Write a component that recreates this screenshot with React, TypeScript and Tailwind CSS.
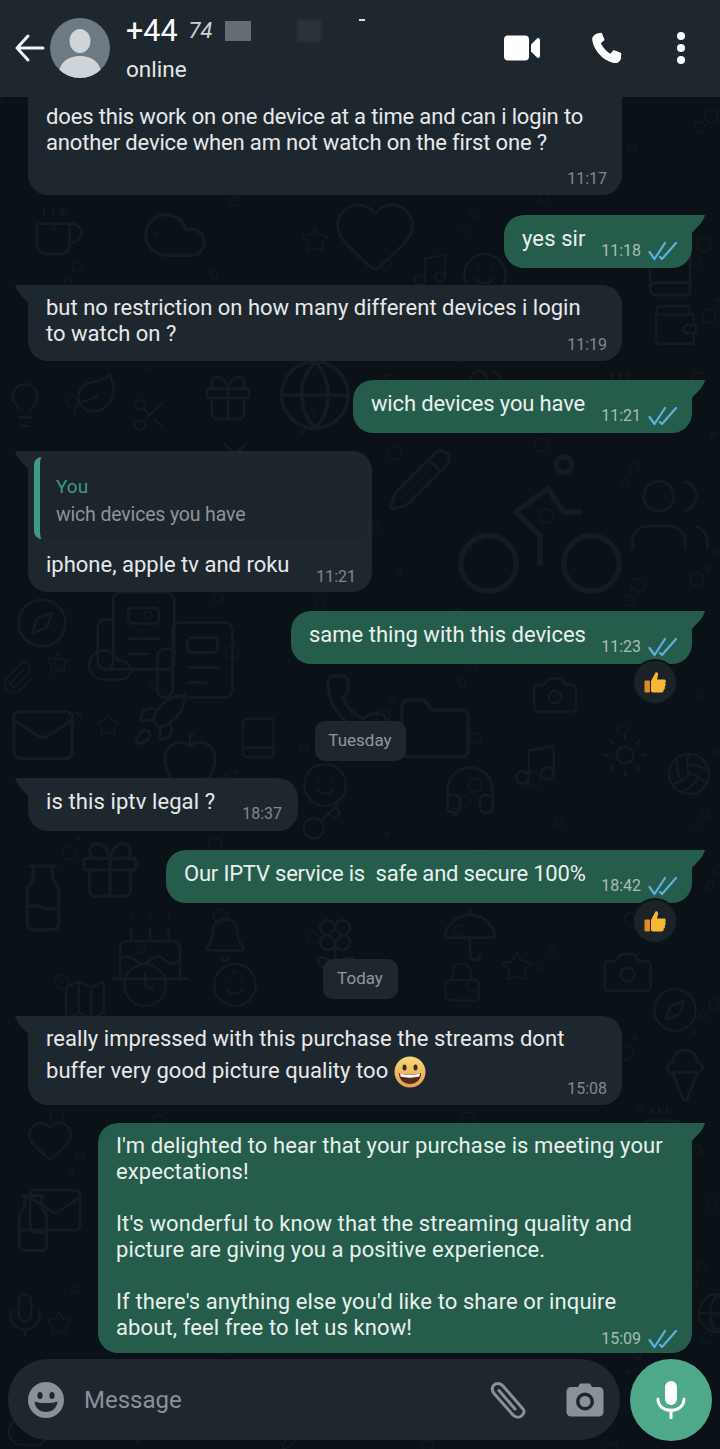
import React from "react";
import { Bike, Compass, Mail, Star, Paperclip, Heart, Music, Camera, Phone, Cloud, Gift, Smile, Pencil, Users, Clock, Folder, Coffee, Sun, Umbrella, Headphones, Book, Globe, Key, Bell, Lock, Flower2, IceCream, Milk, Mic, Rocket, Volleyball, Newspaper, Wallet, Cake, Leaf, Lightbulb, Scissors, Map, Tv, Apple } from "lucide-react";

const doodles: [any, number, number, number][] = [
  [Heart, 330, 190, 90],[Star, 300, 225, 30],[Music, 410, 250, 40],[Globe, 275, 355, 80],[Cloud, 140, 200, 70],[Coffee, 30, 205, 56],[Gift, 200, 370, 56],[Smile, 460, 250, 50],[Book, 640, 240, 60],[Users, 460, 365, 50],[Wallet, 650, 300, 50],[Coffee, 600, 370, 50],[Leaf, 70, 370, 50],[Scissors, 130, 395, 40],[Lightbulb, 0, 380, 50],[Tv, 210, 440, 50],
  [Bike, 445, 425, 190],[Pencil, 385, 445, 70],[Users, 625, 470, 90],[Compass, 14, 595, 56],[Newspaper, 90, 585, 92],[Newspaper, 150, 615, 90],[Cloud, 85, 640, 50],[Star, 45, 650, 26],[Paperclip, 0, 660, 36],
  [Phone, 322, 670, 70],[Folder, 395, 690, 80],[Camera, 530, 670, 50],[Mail, 8, 700, 70],[Rocket, 130, 690, 60],[Star, 95, 712, 26],[Apple, 160, 730, 60],[Book, 235, 715, 46],[Smile, 300, 760, 50],
  [Sun, 600, 730, 50],[Volleyball, 665, 750, 48],[Headphones, 440, 760, 60],[Music, 510, 740, 50],[Milk, 5, 860, 76],[Key, 300, 800, 44],[Gift, 75, 835, 70],[Cake, 105, 900, 90],[Flower2, 305, 915, 60],[Umbrella, 440, 905, 60],
  [Camera, 600, 945, 55],[Bell, 200, 915, 50],[Smile, 210, 960, 50],[Lock, 440, 960, 44],[Star, 500, 950, 34],[Compass, 650, 985, 50],[IceCream, 655, 1045, 60],[Map, 60, 975, 50],[Clock, 120, 960, 50],
  [Heart, 25, 1115, 50],[Milk, 0, 1190, 66],[Mail, 25, 1180, 60],[Star, 45, 1310, 28],[Coffee, 640, 1105, 46],[Mic, 0, 1290, 50],[Cloud, 5, 1410, 44],[Music, 130, 1415, 30],[Globe, 695, 1290, 46],[Pencil, 280, 1425, 26],[Key, 420, 1430, 24],[Leaf, 600, 1440, 20],
];

const dots = Array.from({ length: 190 }, (_, i) => ({
  x: (i * 137 + (i % 7) * 23) % 720,
  y: 100 + ((i * 211 + (i % 5) * 41) % 1340),
  r: 2 + (i % 4) * 1.6,
}));

function Pattern() {
  return (
    <svg className="absolute inset-0 w-[720px] h-[1449px]" viewBox="0 0 720 1449">
      {dots.map((d, i) => (
        <circle key={i} cx={d.x} cy={d.y} r={d.r} fill="none" stroke="#141b21" strokeWidth="1.2" />
      ))}
      {doodles.map(([Icon, x, y, s], i) => (
        <Icon key={i} x={x} y={y} width={s} height={s} color="#141c22" strokeWidth={s > 80 ? 0.7 : 1.1} />
      ))}
    </svg>
  );
}

function Ticks() {
  return (
    <svg width="30" height="20" viewBox="0 0 30 20" className="shrink-0" fill="none" stroke="#5cb2dc" strokeWidth="2.2" strokeLinecap="round" strokeLinejoin="round">
      <path d="M1.5 11 L6.5 18 L17 2" />
      <path d="M12 16 L14 18 L28 2" />
    </svg>
  );
}

function Meta({ time, out, className = "" }: { time: string; out?: boolean; className?: string }) {
  return (
    <div className={`flex items-end gap-[7px] ${className}`}>
      <span className={`text-[16px] leading-[20px] ${out ? "text-[#a5bfb5]" : "text-[#7f898f]"}`}>{time}</span>
      {out && <Ticks />}
    </div>
  );
}

function Tail({ out, color }: { out?: boolean; color: string }) {
  return out ? (
    <svg className="absolute top-0 right-[-13px]" width="14" height="28" viewBox="0 0 14 28"><path d="M0 0 H14 C12 8 6 12 1 18 V28 H0 Z" fill={color} /></svg>
  ) : (
    <svg className="absolute top-0 left-[-13px]" width="14" height="28" viewBox="0 0 14 28"><path d="M14 0 H0 C2 8 8 12 13 18 V28 H14 Z" fill={color} /></svg>
  );
}

function Reaction() {
  return (
    <div className="absolute right-[14px] bottom-[-41px] w-[46px] h-[46px] rounded-full bg-[#1b2329] border-2 border-[#0d1418] flex items-center justify-center">
      <svg width="24" height="24" viewBox="0 0 24 24">
        <path d="M8 11 L12.5 2.5 C14.5 1.8 15.5 3.5 15 5.5 L14 9.5 H21 C23 9.5 23.5 12 22 13 C23.2 14 23 16 21.6 16.6 C22.4 17.8 22 19.4 20.6 19.8 C21 21.4 20 22.6 18.5 22.6 H11 C9.5 22.6 8.5 21.8 8 21.2 Z" fill="#f7b733" />
        <rect x="1.5" y="10.5" width="5.5" height="12" rx="1" fill="#e08a24" />
      </svg>
    </div>
  );
}

type BubbleProps = { out?: boolean; w: string; mt: string; tail?: boolean; reaction?: boolean; children: React.ReactNode; className?: string };
function Bubble({ out, w, mt, tail, reaction, children, className = "" }: BubbleProps) {
  const color = out ? "#265c4b" : "#1f272e";
  return (
    <div className={`relative shrink-0 rounded-[20px] ${tail ? (out ? "rounded-tr-none" : "rounded-tl-none") : ""} ${out ? "self-end mr-[28px] bg-[#265c4b] text-[#e6f1ed]" : "self-start ml-[28px] bg-[#1f272e] text-[#e6e9eb]"} ${w} ${mt} ${className}`}>
      {tail && <Tail out={out} color={color} />}
      {children}
      {reaction && <Reaction />}
    </div>
  );
}

function Line({ text, time, out, spacing = "tracking-normal", pr = "pr-[14px]" }: { text: string; time: string; out?: boolean; spacing?: string; pr?: string }) {
  return (
    <div className={`flex justify-between items-start pl-[18px] h-[53px] ${pr}`}>
      <span className={`leading-[26px] pt-[11px] h-[53px] block whitespace-pre ${spacing}`}>{text}</span>
      <Meta time={time} out={out} className="pb-[7px] self-end" />
    </div>
  );
}

function Chip({ children, w, mt }: { children: React.ReactNode; w: string; mt: string }) {
  return <div className={`self-center shrink-0 h-[40px] rounded-[10px] bg-[#1f272e] text-[#8d979d] text-[17px] flex items-center justify-center ${w} ${mt}`}>{children}</div>;
}

function Grin() {
  return (
    <svg width="32" height="32" viewBox="0 0 32 32" className="inline-block align-middle">
      <defs>
        <linearGradient id="g" x1="0" y1="0" x2="0" y2="1"><stop offset="0" stopColor="#f8d878" /><stop offset="1" stopColor="#e3a04e" /></linearGradient>
      </defs>
      <circle cx="16" cy="16" r="15.5" fill="url(#g)" />
      <ellipse cx="10.5" cy="11.5" rx="2" ry="3" fill="#3d2a1c" />
      <ellipse cx="21.5" cy="11.5" rx="2" ry="3" fill="#3d2a1c" />
      <path d="M5 17 C10 19 22 19 27 17 C27 24 22 28 16 28 C10 28 5 24 5 17 Z" fill="#5a2a1c" />
      <path d="M6 17.5 C11 19.2 21 19.2 26 17.5 L25.4 20.5 C20 22 12 22 6.6 20.5 Z" fill="#fff" />
    </svg>
  );
}

export default function App() {
  return (
    <div className="relative w-[720px] h-[1449px] overflow-hidden bg-[#0b1217] flex flex-col font-['Roboto',sans-serif] text-[22px]">
      <Pattern />
      <header className="relative z-10 h-[97px] shrink-0 bg-[#1f272e] flex items-center text-white">
        <svg width="32" height="32" viewBox="0 0 32 32" className="ml-[14px] mt-[-2px] shrink-0" fill="none" stroke="#f2f4f5" strokeWidth="3" strokeLinecap="round" strokeLinejoin="round">
          <path d="M29 16 H3 M14 4 L3 16 L14 28" />
        </svg>
        <div className="ml-[4px] mt-[-2px] w-[60px] h-[60px] shrink-0 rounded-full bg-[#6b7a84] overflow-hidden flex flex-col items-center">
          <svg width="60" height="60" viewBox="0 0 60 60">
            <ellipse cx="30" cy="23" rx="10.5" ry="12" fill="#cfd4d8" />
            <path d="M9 56 C9 44 19 38 30 38 C41 38 51 44 51 56 C45 62 15 62 9 56 Z" fill="#cfd4d8" />
          </svg>
        </div>
        <div className="ml-[16px] flex flex-col mt-[-2px]">
          <div className="flex items-center h-[40px] -mt-[2px]">
            <span className="text-[30.5px] leading-[40px]">+44</span>
            <span className="ml-[11px] text-[22px] text-[#cfd3d6] italic">74</span>
            <span className="ml-[12px] w-[26px] h-[20px] bg-[#666c71]" />
            <span className="ml-[46px] w-[24px] h-[22px] bg-[#2b333a] blur-[1px]" />
            <span className="ml-[38px] mt-[-22px] w-[6px] h-[2px] bg-[#d8dcdf]" />
          </div>
          <span className="text-[22.5px] leading-[28px] text-[#e3e6e8] mt-[4px]">online</span>
        </div>
        <div className="ml-auto flex items-center mr-[35px] mt-[-1px]">
          <svg width="36" height="26" viewBox="0 0 36 26" fill="#fff">
            <rect x="0" y="0.5" width="25" height="25" rx="4" />
            <path d="M27 9.5 L33 3.5 C34.5 2.5 36 3.5 36 5 V21 C36 22.5 34.5 23.5 33 22.5 L27 16.5 Z" />
          </svg>
          <svg width="34" height="34" viewBox="0 0 24 24" fill="#fff" className="ml-[49px]">
            <path d="M6.6 1.6 L9 1.2 L11 6.4 L8.4 8.7 C9.3 11 12.5 14.8 15 16 L17.4 13.4 L22.8 15.6 L22.6 18.8 C22.4 21 20.6 22.8 18.3 22.6 C10.5 21.8 3.2 13.6 2.3 6.2 C2 3.9 4.2 2 6.6 1.6 Z" />
          </svg>
          <div className="ml-[54px] flex flex-col gap-[4px]">
            <span className="w-[8px] h-[8px] rounded-full bg-white" />
            <span className="w-[8px] h-[8px] rounded-full bg-white" />
            <span className="w-[8px] h-[8px] rounded-full bg-white" />
          </div>
        </div>
      </header>

      <main className="relative flex-1 flex flex-col min-h-0">
        <Bubble w="w-[594px]" mt="mt-[-20px]" className="h-[118px]">
          <p className="pl-[18px] pt-[27px] leading-[26px] whitespace-pre tracking-[-0.16px]">does this work on one device at a time and can i login to{"\n"}another device when am not watch on the first one ?</p>
          <Meta time="11:17" className="absolute right-[15px] bottom-[6px]" />
        </Bubble>
        <Bubble out tail w="w-[188px]" mt="mt-[20px]"><Line out spacing="tracking-[0.1px]" text="yes sir" time="11:18" /></Bubble>
        <Bubble tail w="w-[594px]" mt="mt-[17px]" className="h-[76px]">
          <p className="pl-[18px] pt-[10px] leading-[26px] whitespace-pre">but no restriction on how many different devices i login{"\n"}to watch on ?</p>
          <Meta time="11:19" className="absolute right-[15px] bottom-[6px]" />
        </Bubble>
        <Bubble out tail w="w-[339px]" mt="mt-[19px]"><Line out spacing="tracking-[-0.16px]" text="wich devices you have" time="11:21" /></Bubble>
        <Bubble tail w="w-[344px]" mt="mt-[18px]" className="h-[141px] pt-[6px]">
          <div className="ml-[6px] mr-[5px] h-[82px] rounded-[8px] bg-[#1d242b] border-l-[6px] border-[#3f9c80] pl-[16px] pt-[17px]">
            <div className="text-[#3c9a80] text-[19px] leading-[26px]">You</div>
            <div className="text-[#8b959b] text-[19.5px] leading-[30px] tracking-[-0.16px]">wich devices you have</div>
          </div>
          <div className="pl-[18px] mt-[13px] leading-[26px]">iphone, apple tv and roku</div>
          <Meta time="11:21" className="absolute right-[16px] bottom-[5px]" />
        </Bubble>
        <Bubble out tail reaction w="w-[401px]" mt="mt-[19px]"><Line out text="same thing with this devices" time="11:23" /></Bubble>
        <Chip w="w-[91px]" mt="mt-[57px]">Tuesday</Chip>
        <Bubble tail w="w-[270px]" mt="mt-[17px]"><Line spacing="tracking-[0.1px]" pr="pr-[16px]" text="is this iptv legal ?" time="18:37" /></Bubble>
        <Bubble out tail reaction w="w-[526px]" mt="mt-[19px]"><Line out spacing="tracking-[-0.2px]" text="Our IPTV service is  safe and secure 100%" time="18:42" /></Bubble>
        <Chip w="w-[75px]" mt="mt-[56px]">Today</Chip>
        <Bubble tail w="w-[594px]" mt="mt-[17px]" className="h-[89px]">
          <p className="pl-[18px] pt-[7px] leading-[32px] whitespace-pre tracking-[0.05px]">really impressed with this purchase the streams dont{"\n"}buffer very good picture quality too <Grin /></p>
          <Meta time="15:08" className="absolute right-[15px] bottom-[6px]" />
        </Bubble>
        <Bubble out tail w="w-[594px]" mt="mt-[18px]" className="h-[230px]">
          <p className="pl-[18px] pt-[10px] leading-[26px] whitespace-pre tracking-[0.1px]">I'm delighted to hear that your purchase is meeting your{"\n"}expectations!{"\n\n"}It's wonderful to know that the streaming quality and{"\n"}picture are giving you a positive experience.{"\n\n"}If there's anything else you'd like to share or inquire{"\n"}about, feel free to let us know!</p>
          <Meta out time="15:09" className="absolute right-[14px] bottom-[4px]" />
        </Bubble>
      </main>

      <footer className="relative z-10 shrink-0 h-[90px] pl-[8px] flex items-start gap-[10px]">
        <div className="w-[612px] h-[81px] rounded-[40px] bg-[#1f272e] flex items-center pl-[20px] pr-[16px]">
          <svg width="36" height="36" viewBox="0 0 36 36" className="shrink-0">
            <circle cx="18" cy="18" r="18" fill="#8b9297" />
            <ellipse cx="12" cy="13.5" rx="2.6" ry="3.6" fill="#1f272e" />
            <ellipse cx="24" cy="13.5" rx="2.6" ry="3.6" fill="#1f272e" />
            <path d="M6.5 19.5 C12 21.5 24 21.5 29.5 19.5 C29 26 24 30 18 30 C12 30 7 26 6.5 19.5 Z" fill="#1f272e" />
          </svg>
          <span className="ml-[20px] text-[24px] text-[#89929a]">Message</span>
          <svg width="42" height="42" viewBox="0 0 42 42" className="ml-auto shrink-0" fill="none" stroke="#8b9297" strokeWidth="3" strokeLinecap="round" strokeLinejoin="round">
            <path d="M35 30 L15 7 C12.5 4 8.5 3.5 6 6 C3.5 8.5 4 12 6.5 15 L25 36 C27.5 38.5 31.5 39 34 36.5 C36.5 34 36.5 31.5 35 30 M27 30 L11 11.5" />
          </svg>
          <svg width="38" height="34" viewBox="0 0 38 34" className="ml-[36px] shrink-0">
            <path fillRule="evenodd" d="M12 4 L14 0.5 H24 L26 4 H33 C35.5 4 37.5 6 37.5 8.5 V29 C37.5 31.5 35.5 33.5 33 33.5 H5 C2.5 33.5 0.5 31.5 0.5 29 V8.5 C0.5 6 2.5 4 5 4 Z M19 9.5 A9 9 0 1 0 19.01 27.5 A9 9 0 1 0 19 9.5 Z M19 13 A5.5 5.5 0 1 1 18.99 24 A5.5 5.5 0 1 1 19 13 Z" fill="#8b9297" />
          </svg>
        </div>
        <div className="w-[82px] h-[82px] rounded-full bg-[#4ea98a] flex items-center justify-center">
          <svg width="30" height="38" viewBox="0 0 30 38" fill="none">
            <rect x="9" y="0" width="12" height="24" rx="6" fill="#fff" />
            <path d="M2 18 C2 25 8 29.5 15 29.5 C22 29.5 28 25 28 18 M15 29 V37" stroke="#fff" strokeWidth="3" strokeLinecap="round" />
          </svg>
        </div>
      </footer>
    </div>
  );
}
